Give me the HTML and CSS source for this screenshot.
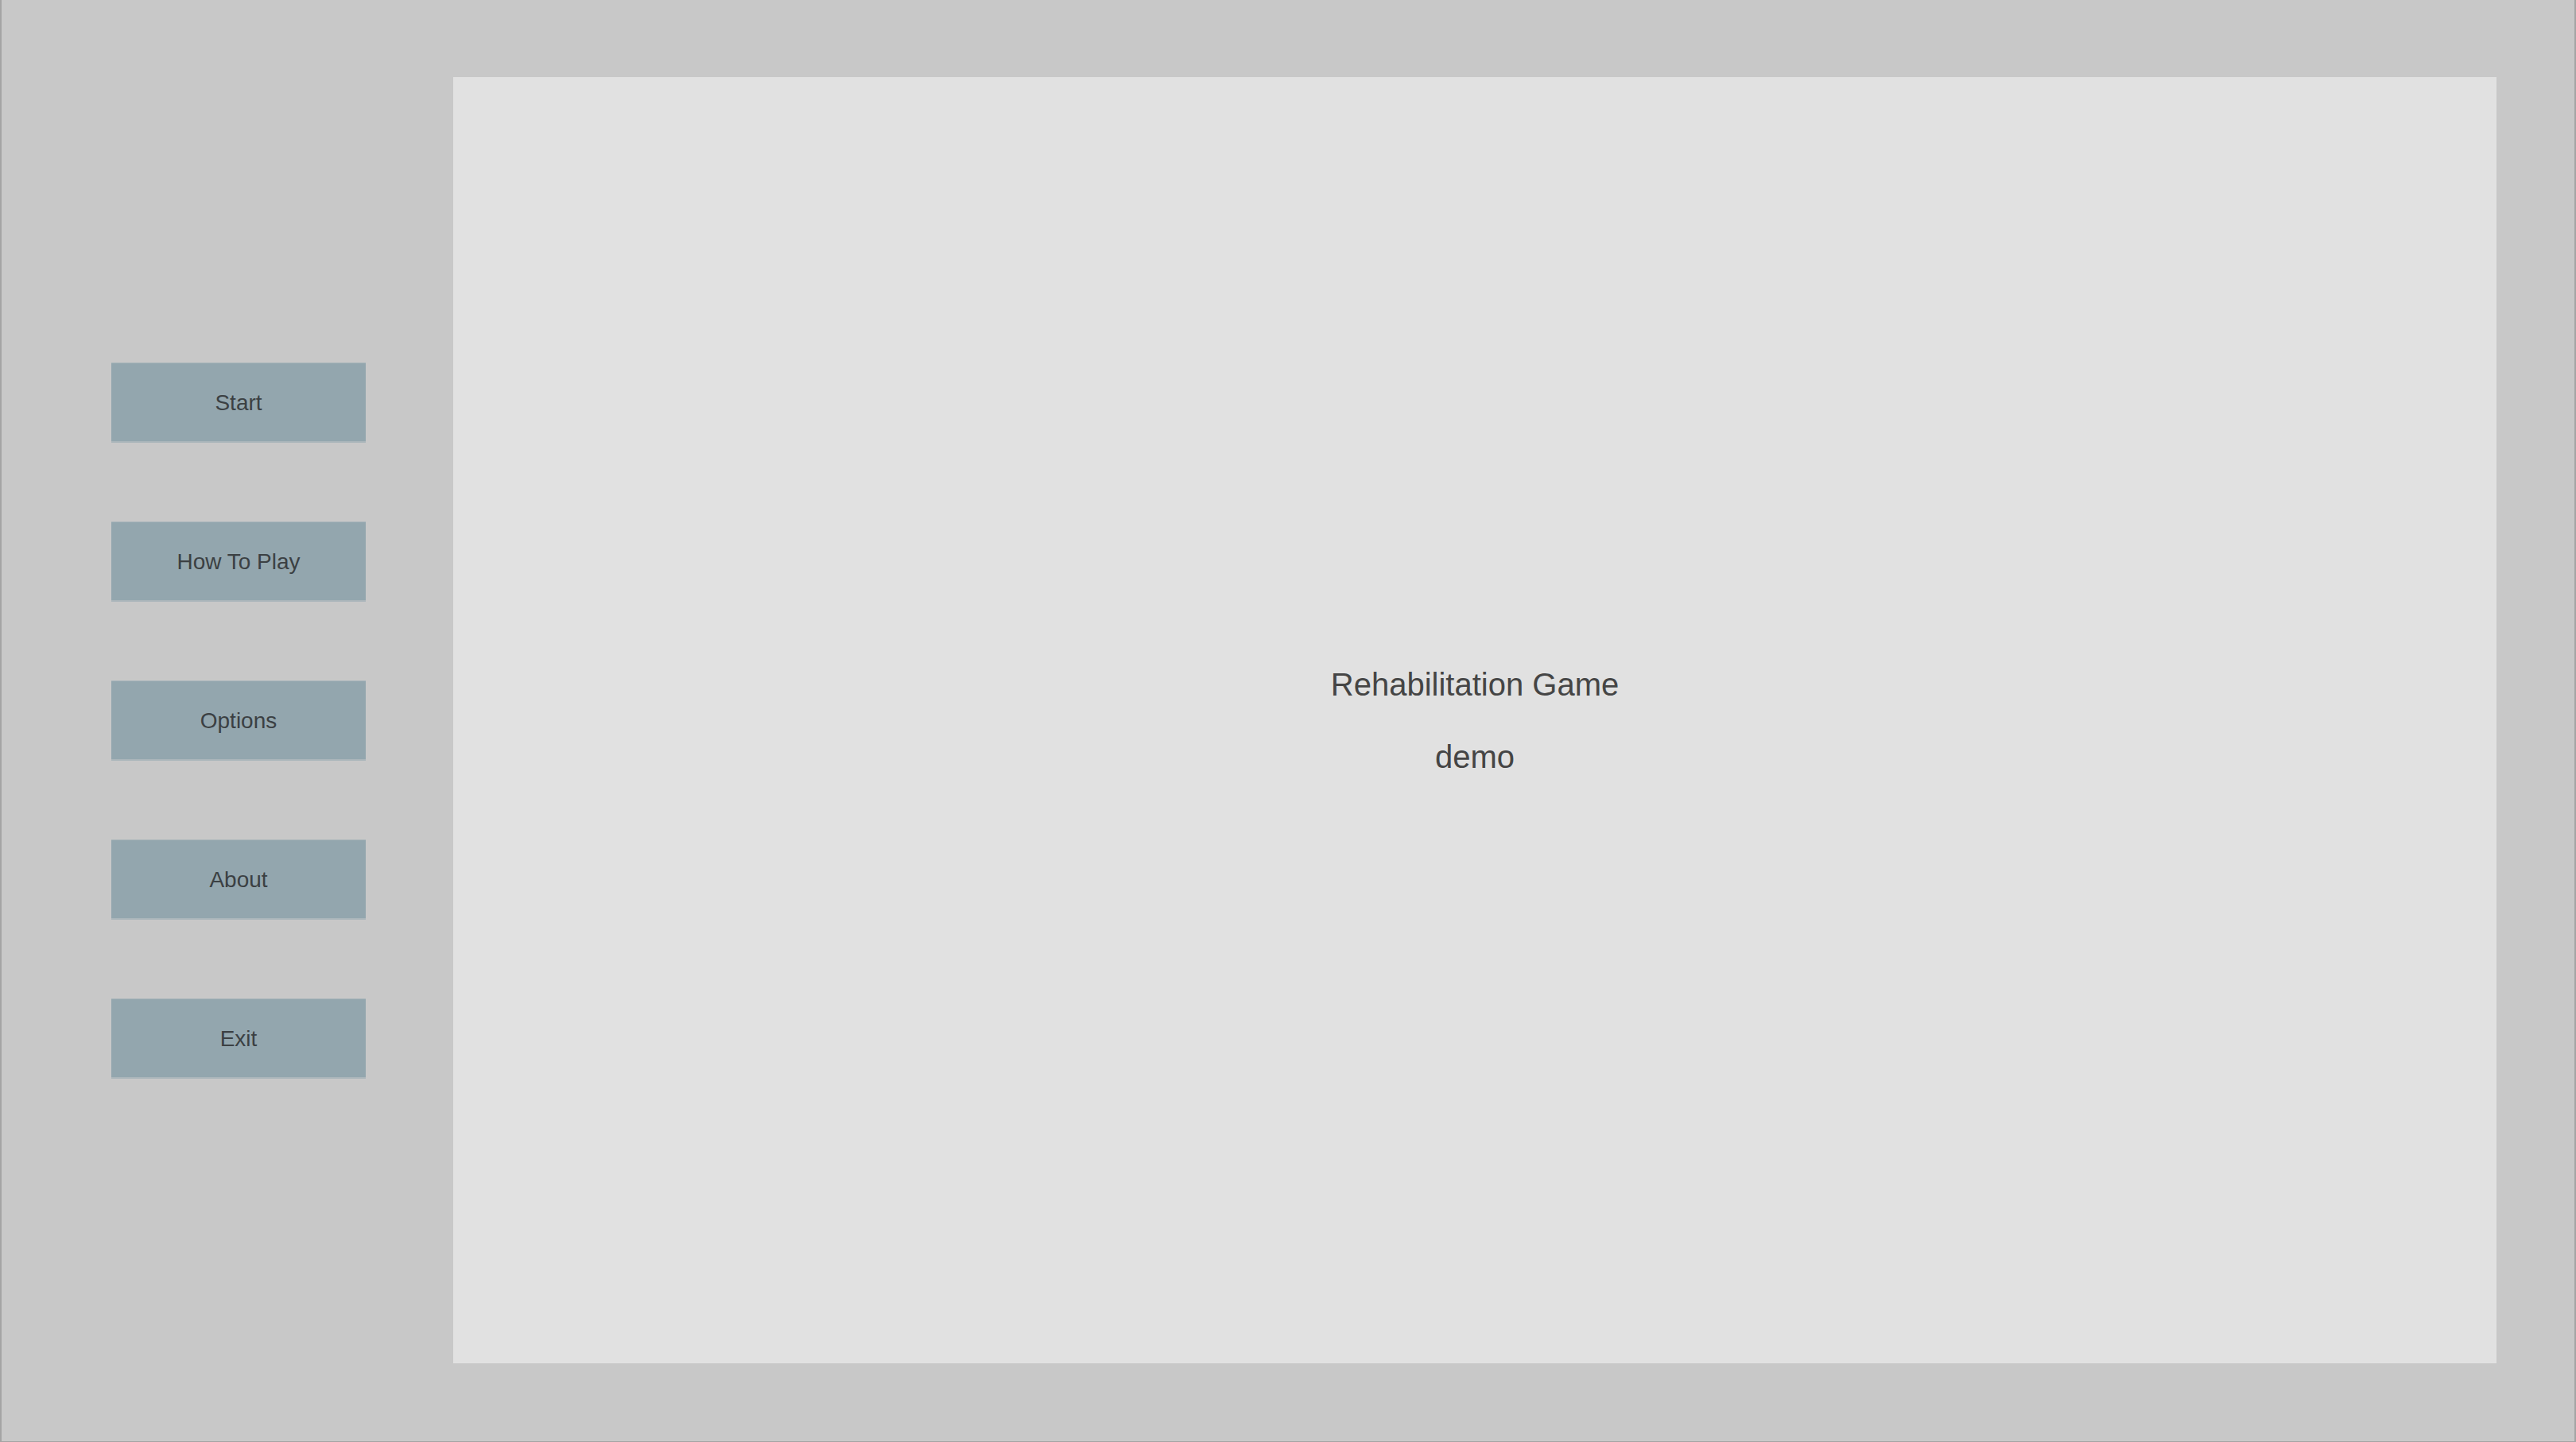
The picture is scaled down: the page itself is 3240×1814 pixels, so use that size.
FILE: index.html
```html
<!DOCTYPE html>
<html lang="en">
<head>
<meta charset="utf-8">
<title>Rehabilitation Game</title>
<link rel="stylesheet" href="styles.css">
</head>
<body>
<div class="screen">
  <nav class="menu">
    <button class="menu-btn">Start</button>
    <button class="menu-btn">How To Play</button>
    <button class="menu-btn">Options</button>
    <button class="menu-btn">About</button>
    <button class="menu-btn">Exit</button>
  </nav>
  <main class="panel">
    <div class="title">Rehabilitation Game</div>
    <div class="subtitle">demo</div>
  </main>
</div>
</body>
</html>
```
FILE: styles.css
```css
html, body {
  margin: 0;
  padding: 0;
  background: #c8c8c8;
}

.screen {
  box-sizing: border-box;
  width: 3240px;
  height: 1814px;
  display: flex;
  background: #c8c8c8;
  border-left: 2px solid #a4a4a4;
  border-right: 2px solid #a4a4a4;
  border-bottom: 1px solid #a4a4a4;
  padding: 97px 98px 98px 0;
  font-family: "Liberation Sans", Arial, sans-serif;
}

.menu {
  box-sizing: border-box;
  width: 568px;
  flex: none;
  display: flex;
  flex-direction: column;
  justify-content: center;
  align-items: flex-start;
  gap: 99px;
  padding-left: 138px;
}

.menu-btn {
  box-sizing: border-box;
  width: 320px;
  height: 101px;
  margin: 0;
  padding: 3px 0 0 0;
  background: #93a6ae;
  border: none;
  border-top: 1px solid #abb6bb;
  border-bottom: 2px solid #abb6bb;
  color: #3b4043;
  font-family: "Liberation Sans", Arial, sans-serif;
  font-size: 28px;
  line-height: 1;
}

.panel {
  flex: 1;
  background: #e1e1e1;
  display: flex;
  flex-direction: column;
  justify-content: center;
  align-items: center;
  gap: 45px;
  color: #454545;
}

.title,
.subtitle {
  font-size: 40px;
  line-height: 46px;
}
```
